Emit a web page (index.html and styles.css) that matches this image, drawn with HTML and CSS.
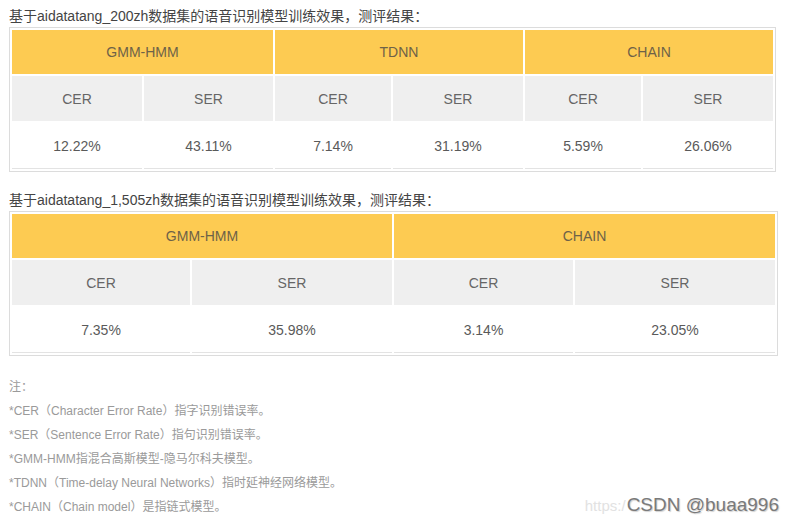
FILE: index.html
```html
<!DOCTYPE html>
<html lang="zh-CN">
<head>
<meta charset="utf-8">
<link rel="stylesheet" href="styles.css">
</head>
<body>
<main class="page">
  <p class="caption">基于aidatatang_200zh数据集的语音识别模型训练效果，测评结果：</p>
  <table class="result t1">
    <colgroup>
      <col class="c130"><col class="c129"><col class="c116"><col class="c130"><col class="c116"><col class="c130">
    </colgroup>
    <tr class="head"><td colspan="2">GMM-HMM</td><td colspan="2">TDNN</td><td colspan="2">CHAIN</td></tr>
    <tr class="sub"><td>CER</td><td>SER</td><td>CER</td><td>SER</td><td>CER</td><td>SER</td></tr>
    <tr class="val"><td>12.22%</td><td>43.11%</td><td>7.14%</td><td>31.19%</td><td>5.59%</td><td>26.06%</td></tr>
  </table>

  <p class="caption second">基于aidatatang_1,505zh数据集的语音识别模型训练效果，测评结果：</p>
  <table class="result t2">
    <colgroup>
      <col class="c178"><col class="c200"><col class="c179"><col class="c200">
    </colgroup>
    <tr class="head"><td colspan="2">GMM-HMM</td><td colspan="2">CHAIN</td></tr>
    <tr class="sub"><td>CER</td><td>SER</td><td>CER</td><td>SER</td></tr>
    <tr class="val"><td>7.35%</td><td>35.98%</td><td>3.14%</td><td>23.05%</td></tr>
  </table>

  <ul class="notes">
    <li>注：</li>
    <li>*CER（Character Error Rate）指字识别错误率。</li>
    <li>*SER（Sentence Error Rate）指句识别错误率。</li>
    <li>*GMM-HMM指混合高斯模型-隐马尔科夫模型。</li>
    <li>*TDNN（Time-delay Neural Networks）指时延神经网络模型。</li>
    <li>*CHAIN（Chain model）是指链式模型。</li>
  </ul>
</main>
<div class="watermark"><span class="url">https:/</span><span class="brand">CSDN @buaa996</span></div>
</body>
</html>
```

FILE: styles.css
```css
html, body {
  margin: 0;
  padding: 0;
  background: #fff;
}
body {
  font-family: "Liberation Sans", Arial, "Noto Sans CJK SC", sans-serif;
  width: 794px;
  height: 524px;
  overflow: hidden;
  position: relative;
}
.page {
  padding: 5px 0 0 9px;
}
.caption {
  margin: 0;
  font-size: 14px;
  line-height: 22px;
  color: #444;
  white-space: nowrap;
}
.caption.second {
  margin-top: 17px;
}
.result {
  border: 1px solid #dcdcdc;
  border-collapse: separate;
  border-spacing: 2px;
  table-layout: fixed;
  width: 767px;
  font-size: 14px;
  color: #666;
}
.result td {
  text-align: center;
  padding: 0;
  height: 44px;
}
.result .head td {
  background: #fdcb52;
  color: #6e6248;
}
.result .sub td {
  background: #efefef;
  height: 45px;
}
.result .val td {
  background: #fff;
  height: 45px;
  border-bottom: 1px solid #e3e3e3;
  color: #5a5a5a;
}
.c130 { width: 130px; }
.c129 { width: 129px; }
.c116 { width: 116px; }
.c178 { width: 178px; }
.c179 { width: 179px; }
.c200 { width: 200px; }

.notes {
  list-style: none;
  margin: 19px 0 0;
  padding: 0;
  font-size: 12px;
  line-height: 24px;
  color: #9a9a9a;
}
.watermark {
  position: absolute;
  right: 15px;
  bottom: 8px;
  display: flex;
  align-items: baseline;
  white-space: nowrap;
  font-family: "Liberation Sans", Arial, sans-serif;
  line-height: 20px;
}
.watermark .url {
  font-size: 15px;
  color: #e2e2e2;
  margin-right: 1px;
}
.watermark .brand {
  font-size: 19px;
  color: #7a7a7a;
  text-shadow: 1px 1px 1px #d0d0d0;
}
```
